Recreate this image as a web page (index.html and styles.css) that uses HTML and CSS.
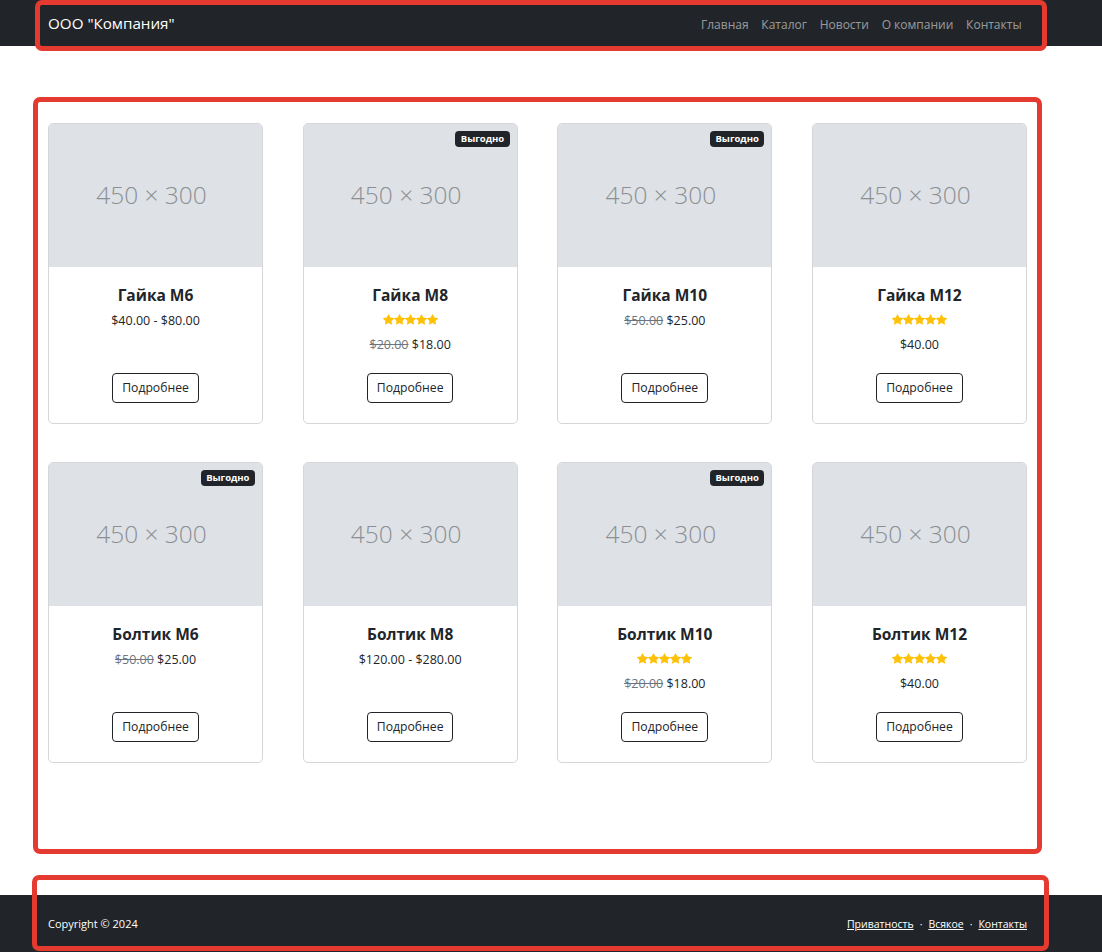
FILE: index.html
```html
<!DOCTYPE html>
<html lang="ru">
<head>
<meta charset="utf-8">
<title>ООО "Компания"</title>
<link rel="stylesheet" href="styles.css">
</head>
<body>
<nav class="navbar">
  <div class="container nav-inner">
    <a class="brand" href="#">ООО "Компания"</a>
    <ul class="nav-links">
      <li><a href="#">Главная</a></li>
      <li><a href="#">Каталог</a></li>
      <li><a href="#">Новости</a></li>
      <li><a href="#">О компании</a></li>
      <li><a href="#">Контакты</a></li>
    </ul>
  </div>
</nav>

<section class="catalog">
  <div class="container grid">
    <div class="card">
      <div class="ph">450 × 300</div>
      <div class="body"><h5>Гайка M6</h5><div class="price">$40.00 - $80.00</div></div>
      <div class="foot"><a class="btn" href="#">Подробнее</a></div>
    </div>
    <div class="card">
      <span class="badge">Выгодно</span>
      <div class="ph">450 × 300</div>
      <div class="body"><h5>Гайка M8</h5>
        <div class="stars"><svg viewBox="0 0 16 16"><path d="M3.612 15.443c-.386.198-.824-.149-.746-.592l.83-4.73L.173 6.765c-.329-.314-.158-.888.283-.95l4.898-.696L7.538.792c.197-.39.73-.39.927 0l2.184 4.327 4.898.696c.441.062.612.636.282.95l-3.522 3.356.83 4.73c.078.443-.36.79-.746.592L8 13.187l-4.389 2.256z"/></svg><svg viewBox="0 0 16 16"><path d="M3.612 15.443c-.386.198-.824-.149-.746-.592l.83-4.73L.173 6.765c-.329-.314-.158-.888.283-.95l4.898-.696L7.538.792c.197-.39.73-.39.927 0l2.184 4.327 4.898.696c.441.062.612.636.282.95l-3.522 3.356.83 4.73c.078.443-.36.79-.746.592L8 13.187l-4.389 2.256z"/></svg><svg viewBox="0 0 16 16"><path d="M3.612 15.443c-.386.198-.824-.149-.746-.592l.83-4.73L.173 6.765c-.329-.314-.158-.888.283-.95l4.898-.696L7.538.792c.197-.39.73-.39.927 0l2.184 4.327 4.898.696c.441.062.612.636.282.95l-3.522 3.356.83 4.73c.078.443-.36.79-.746.592L8 13.187l-4.389 2.256z"/></svg><svg viewBox="0 0 16 16"><path d="M3.612 15.443c-.386.198-.824-.149-.746-.592l.83-4.73L.173 6.765c-.329-.314-.158-.888.283-.95l4.898-.696L7.538.792c.197-.39.73-.39.927 0l2.184 4.327 4.898.696c.441.062.612.636.282.95l-3.522 3.356.83 4.73c.078.443-.36.79-.746.592L8 13.187l-4.389 2.256z"/></svg><svg viewBox="0 0 16 16"><path d="M3.612 15.443c-.386.198-.824-.149-.746-.592l.83-4.73L.173 6.765c-.329-.314-.158-.888.283-.95l4.898-.696L7.538.792c.197-.39.73-.39.927 0l2.184 4.327 4.898.696c.441.062.612.636.282.95l-3.522 3.356.83 4.73c.078.443-.36.79-.746.592L8 13.187l-4.389 2.256z"/></svg></div>
        <div class="price"><span class="old">$20.00</span> $18.00</div></div>
      <div class="foot"><a class="btn" href="#">Подробнее</a></div>
    </div>
    <div class="card">
      <span class="badge">Выгодно</span>
      <div class="ph">450 × 300</div>
      <div class="body"><h5>Гайка M10</h5><div class="price"><span class="old">$50.00</span> $25.00</div></div>
      <div class="foot"><a class="btn" href="#">Подробнее</a></div>
    </div>
    <div class="card">
      <div class="ph">450 × 300</div>
      <div class="body"><h5>Гайка M12</h5>
        <div class="stars"><svg viewBox="0 0 16 16"><path d="M3.612 15.443c-.386.198-.824-.149-.746-.592l.83-4.73L.173 6.765c-.329-.314-.158-.888.283-.95l4.898-.696L7.538.792c.197-.39.73-.39.927 0l2.184 4.327 4.898.696c.441.062.612.636.282.95l-3.522 3.356.83 4.73c.078.443-.36.79-.746.592L8 13.187l-4.389 2.256z"/></svg><svg viewBox="0 0 16 16"><path d="M3.612 15.443c-.386.198-.824-.149-.746-.592l.83-4.73L.173 6.765c-.329-.314-.158-.888.283-.95l4.898-.696L7.538.792c.197-.39.73-.39.927 0l2.184 4.327 4.898.696c.441.062.612.636.282.95l-3.522 3.356.83 4.73c.078.443-.36.79-.746.592L8 13.187l-4.389 2.256z"/></svg><svg viewBox="0 0 16 16"><path d="M3.612 15.443c-.386.198-.824-.149-.746-.592l.83-4.73L.173 6.765c-.329-.314-.158-.888.283-.95l4.898-.696L7.538.792c.197-.39.73-.39.927 0l2.184 4.327 4.898.696c.441.062.612.636.282.95l-3.522 3.356.83 4.73c.078.443-.36.79-.746.592L8 13.187l-4.389 2.256z"/></svg><svg viewBox="0 0 16 16"><path d="M3.612 15.443c-.386.198-.824-.149-.746-.592l.83-4.73L.173 6.765c-.329-.314-.158-.888.283-.95l4.898-.696L7.538.792c.197-.39.73-.39.927 0l2.184 4.327 4.898.696c.441.062.612.636.282.95l-3.522 3.356.83 4.73c.078.443-.36.79-.746.592L8 13.187l-4.389 2.256z"/></svg><svg viewBox="0 0 16 16"><path d="M3.612 15.443c-.386.198-.824-.149-.746-.592l.83-4.73L.173 6.765c-.329-.314-.158-.888.283-.95l4.898-.696L7.538.792c.197-.39.73-.39.927 0l2.184 4.327 4.898.696c.441.062.612.636.282.95l-3.522 3.356.83 4.73c.078.443-.36.79-.746.592L8 13.187l-4.389 2.256z"/></svg></div>
        <div class="price">$40.00</div></div>
      <div class="foot"><a class="btn" href="#">Подробнее</a></div>
    </div>

    <div class="card">
      <span class="badge">Выгодно</span>
      <div class="ph">450 × 300</div>
      <div class="body"><h5>Болтик M6</h5><div class="price"><span class="old">$50.00</span> $25.00</div></div>
      <div class="foot"><a class="btn" href="#">Подробнее</a></div>
    </div>
    <div class="card">
      <div class="ph">450 × 300</div>
      <div class="body"><h5>Болтик M8</h5><div class="price">$120.00 - $280.00</div></div>
      <div class="foot"><a class="btn" href="#">Подробнее</a></div>
    </div>
    <div class="card">
      <span class="badge">Выгодно</span>
      <div class="ph">450 × 300</div>
      <div class="body"><h5>Болтик M10</h5>
        <div class="stars"><svg viewBox="0 0 16 16"><path d="M3.612 15.443c-.386.198-.824-.149-.746-.592l.83-4.73L.173 6.765c-.329-.314-.158-.888.283-.95l4.898-.696L7.538.792c.197-.39.73-.39.927 0l2.184 4.327 4.898.696c.441.062.612.636.282.95l-3.522 3.356.83 4.73c.078.443-.36.79-.746.592L8 13.187l-4.389 2.256z"/></svg><svg viewBox="0 0 16 16"><path d="M3.612 15.443c-.386.198-.824-.149-.746-.592l.83-4.73L.173 6.765c-.329-.314-.158-.888.283-.95l4.898-.696L7.538.792c.197-.39.73-.39.927 0l2.184 4.327 4.898.696c.441.062.612.636.282.95l-3.522 3.356.83 4.73c.078.443-.36.79-.746.592L8 13.187l-4.389 2.256z"/></svg><svg viewBox="0 0 16 16"><path d="M3.612 15.443c-.386.198-.824-.149-.746-.592l.83-4.73L.173 6.765c-.329-.314-.158-.888.283-.95l4.898-.696L7.538.792c.197-.39.73-.39.927 0l2.184 4.327 4.898.696c.441.062.612.636.282.95l-3.522 3.356.83 4.73c.078.443-.36.79-.746.592L8 13.187l-4.389 2.256z"/></svg><svg viewBox="0 0 16 16"><path d="M3.612 15.443c-.386.198-.824-.149-.746-.592l.83-4.73L.173 6.765c-.329-.314-.158-.888.283-.95l4.898-.696L7.538.792c.197-.39.73-.39.927 0l2.184 4.327 4.898.696c.441.062.612.636.282.95l-3.522 3.356.83 4.73c.078.443-.36.79-.746.592L8 13.187l-4.389 2.256z"/></svg><svg viewBox="0 0 16 16"><path d="M3.612 15.443c-.386.198-.824-.149-.746-.592l.83-4.73L.173 6.765c-.329-.314-.158-.888.283-.95l4.898-.696L7.538.792c.197-.39.73-.39.927 0l2.184 4.327 4.898.696c.441.062.612.636.282.95l-3.522 3.356.83 4.73c.078.443-.36.79-.746.592L8 13.187l-4.389 2.256z"/></svg></div>
        <div class="price"><span class="old">$20.00</span> $18.00</div></div>
      <div class="foot"><a class="btn" href="#">Подробнее</a></div>
    </div>
    <div class="card">
      <div class="ph">450 × 300</div>
      <div class="body"><h5>Болтик M12</h5>
        <div class="stars"><svg viewBox="0 0 16 16"><path d="M3.612 15.443c-.386.198-.824-.149-.746-.592l.83-4.73L.173 6.765c-.329-.314-.158-.888.283-.95l4.898-.696L7.538.792c.197-.39.73-.39.927 0l2.184 4.327 4.898.696c.441.062.612.636.282.95l-3.522 3.356.83 4.73c.078.443-.36.79-.746.592L8 13.187l-4.389 2.256z"/></svg><svg viewBox="0 0 16 16"><path d="M3.612 15.443c-.386.198-.824-.149-.746-.592l.83-4.73L.173 6.765c-.329-.314-.158-.888.283-.95l4.898-.696L7.538.792c.197-.39.73-.39.927 0l2.184 4.327 4.898.696c.441.062.612.636.282.95l-3.522 3.356.83 4.73c.078.443-.36.79-.746.592L8 13.187l-4.389 2.256z"/></svg><svg viewBox="0 0 16 16"><path d="M3.612 15.443c-.386.198-.824-.149-.746-.592l.83-4.73L.173 6.765c-.329-.314-.158-.888.283-.95l4.898-.696L7.538.792c.197-.39.73-.39.927 0l2.184 4.327 4.898.696c.441.062.612.636.282.95l-3.522 3.356.83 4.73c.078.443-.36.79-.746.592L8 13.187l-4.389 2.256z"/></svg><svg viewBox="0 0 16 16"><path d="M3.612 15.443c-.386.198-.824-.149-.746-.592l.83-4.73L.173 6.765c-.329-.314-.158-.888.283-.95l4.898-.696L7.538.792c.197-.39.73-.39.927 0l2.184 4.327 4.898.696c.441.062.612.636.282.95l-3.522 3.356.83 4.73c.078.443-.36.79-.746.592L8 13.187l-4.389 2.256z"/></svg><svg viewBox="0 0 16 16"><path d="M3.612 15.443c-.386.198-.824-.149-.746-.592l.83-4.73L.173 6.765c-.329-.314-.158-.888.283-.95l4.898-.696L7.538.792c.197-.39.73-.39.927 0l2.184 4.327 4.898.696c.441.062.612.636.282.95l-3.522 3.356.83 4.73c.078.443-.36.79-.746.592L8 13.187l-4.389 2.256z"/></svg></div>
        <div class="price">$40.00</div></div>
      <div class="foot"><a class="btn" href="#">Подробнее</a></div>
    </div>
  </div>
</section>

<footer class="footer">
  <div class="container foot-inner">
    <p class="copy">Copyright © 2024</p>
    <div class="flinks"><a href="#">Приватность</a><span class="dot">·</span><a href="#">Всякое</a><span class="dot">·</span><a href="#">Контакты</a></div>
  </div>
</footer>

<div class="mark mark-nav"></div>
<div class="mark mark-main"></div>
<div class="mark mark-foot"></div>
</body>
</html>
```

FILE: styles.css
```css
* { box-sizing: border-box; }
html, body { margin: 0; padding: 0; }
body {
  font-family: "Open Sans", "Noto Sans", "Liberation Sans", sans-serif;
  font-size: 12.5px;
  line-height: 1.5;
  color: #212529;
  background: #fff;
  overflow: hidden;
}
a { text-decoration: none; }

.container { width: 1102px; padding: 0 74px 0 48px; }

.navbar { background: #212529; height: 46px; }
.nav-inner { height: 46px; display: flex; align-items: center; justify-content: space-between; }
.brand { color: #fff; font-size: 15.2px; line-height: 1; padding-top: 1px; }
.nav-links { list-style: none; margin: 0; padding: 0; display: flex; padding-top: 3px; }
.nav-links a { display: block; padding: 6px 6.4px; color: rgba(255,255,255,.55); font-size: 12px; }

.catalog { padding: 77px 0 132px; }
.grid {
  display: grid;
  grid-template-columns: repeat(4, 215px);
  column-gap: 39.67px;
  row-gap: 38px;
}
.card {
  position: relative;
  display: flex;
  flex-direction: column;
  border: 1px solid #d5d6d8;
  border-radius: 5px;
  overflow: hidden;
  height: 301px;
}
.ph {
  height: 143px;
  flex: none;
  background: #dee2e6;
  color: #8c8f93;
  font-weight: 300;
  font-size: 24.5px;
  display: flex;
  align-items: center;
  justify-content: center;
  padding: 0 8px 0 0;
}
.badge {
  position: absolute;
  top: 7px;
  right: 7px;
  background: #212529;
  color: #fff;
  font-size: 9.5px;
  font-weight: 700;
  line-height: 1;
  padding: 3px 5.5px;
  border-radius: 4px;
}
.body {
  flex: 1;
  padding: 19px 19px 0;
  text-align: center;
}
.body h5 {
  margin: 0 0 6px;
  font-size: 15.5px;
  font-weight: 700;
  line-height: 1.2;
}
.stars {
  display: flex;
  justify-content: center;
  height: 17px;
  align-items: center;
  margin-bottom: 7px;
  fill: #ffc107;
}
.stars svg { width: 11px; height: 11px; }
.price { font-size: 12.5px; line-height: 19.5px; }
.old { color: #6c757d; text-decoration: line-through; }
.foot {
  flex: none;
  padding: 0 19px 20px;
  text-align: center;
}
.btn {
  display: inline-block;
  height: 30px;
  line-height: 28px;
  padding: 0 9px;
  border: 1px solid #212529;
  border-radius: 4px;
  color: #212529;
  font-size: 12.2px;
}

.footer { background: #212529; height: 58px; }
.foot-inner { height: 58px; display: flex; align-items: center; justify-content: space-between; padding-top: 1px; }
.copy { margin: 0; color: #fff; font-size: 11px; }
.flinks { display: flex; align-items: center; font-size: 10.5px; padding-right: 1px; }
.flinks a { color: #fff; text-decoration: underline; }
.dot { color: #fff; margin: 0 6px; }

.mark {
  position: fixed;
  border: 5px solid #e53a2f;
  border-radius: 7px;
  pointer-events: none;
}
.mark-nav { left: 35px; top: 0; width: 1012px; height: 51px; }
.mark-main { left: 33px; top: 97px; width: 1009px; height: 757px; }
.mark-foot { left: 32px; top: 875px; width: 1017px; height: 76px; }
```
